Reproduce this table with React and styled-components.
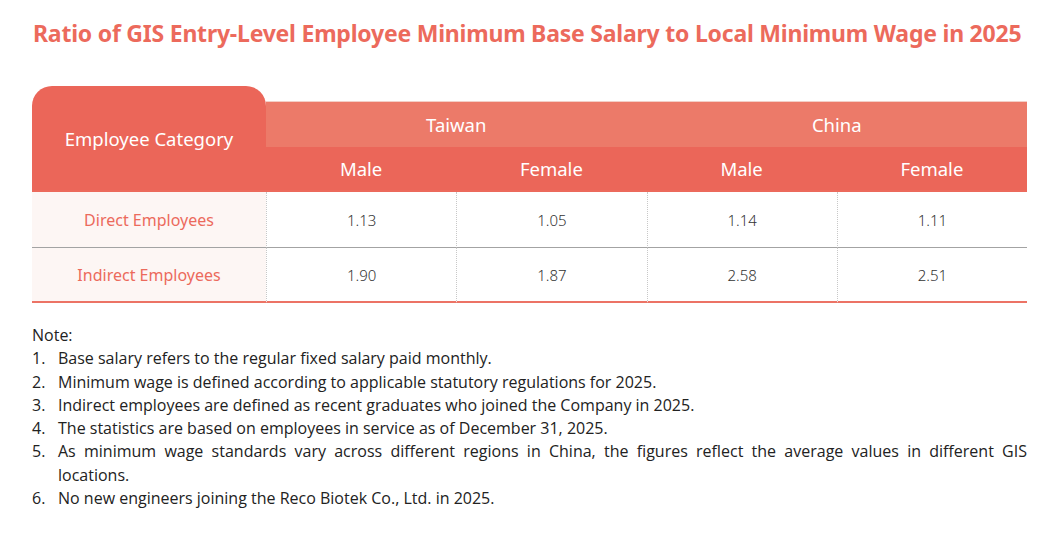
import React from "react";
import styled, { createGlobalStyle } from "styled-components";

const GlobalStyle = createGlobalStyle`
  html, body {
    margin: 0;
    padding: 0;
    background: #ffffff;
  }
  body {
    font-family: "Noto Sans", "Open Sans", sans-serif;
  }
`;

const Page = styled.div`
  width: 1052px;
  height: 535px;
  box-sizing: border-box;
  padding: 16px 25px 0 32px;
`;

const Title = styled.h1`
  margin: 0 0 36px 1px;
  font-family: "Noto Sans", sans-serif;
  font-size: 23px;
  line-height: 34px;
  font-weight: 700;
  color: #ec6a5c;
  letter-spacing: -0.22px;
`;

const Table = styled.div`
  display: grid;
  grid-template-columns: 234px repeat(4, 1fr);
  grid-template-rows: 15px 46px 45px 56px 55px;
`;

const CategoryHead = styled.div`
  grid-row: 1 / span 3;
  grid-column: 1;
  background: #eb6659;
  border-radius: 20px 20px 0 0;
  color: #fff;
  font-size: 18.5px;
  display: flex;
  align-items: center;
  justify-content: center;
  border-bottom: 2px solid #ec6a5c;
`;

const RegionHead = styled.div`
  grid-row: 2;
  grid-column: ${({ $col }) => $col} / span 2;
  background: #ec7a69;
  border-top: 1px solid #f3cfc7;
  color: #fff;
  font-size: 18.5px;
  display: flex;
  align-items: center;
  justify-content: center;
`;

const GenderHead = styled.div`
  grid-row: 3;
  background: #eb6659;
  color: #fff;
  font-size: 18.5px;
  display: flex;
  align-items: center;
  justify-content: center;
  border-bottom: 2px solid #ec6a5c;
`;

const Cell = styled.div`
  grid-row: ${({ $row }) => $row};
  display: flex;
  align-items: center;
  justify-content: center;
  font-size: 15px;
  color: #333;
  font-weight: 300;
  border-bottom: ${({ $last }) => ($last ? "2px solid #ec7365" : "1px solid #a3a3a3")};
  border-left: ${({ $first }) => ($first ? "none" : "1px dotted #c8c8c8")};
  background: ${({ $label }) => ($label ? "#fdf6f4" : "#fff")};
  ${({ $label }) => $label && "color: #ec6a5c; font-size: 16px; font-weight: 400;"}
`;

const Notes = styled.div`
  margin-top: 21px;
  font-family: "Open Sans", sans-serif;
  font-size: 16px;
  line-height: 23.3px;
  color: #222;
`;

const NoteList = styled.ol`
  margin: 0;
  padding: 0;
  list-style: none;
`;

const NoteItem = styled.li`
  display: grid;
  grid-template-columns: 26px 1fr;
  text-align: justify;
`;

const rows = [
  { label: "Direct Employees", values: ["1.13", "1.05", "1.14", "1.11"] },
  { label: "Indirect Employees", values: ["1.90", "1.87", "2.58", "2.51"] },
];

const notes = [
  "Base salary refers to the regular fixed salary paid monthly.",
  "Minimum wage is defined according to applicable statutory regulations for 2025.",
  "Indirect employees are defined as recent graduates who joined the Company in 2025.",
  "The statistics are based on employees in service as of December 31, 2025.",
  "As minimum wage standards vary across different regions in China, the figures reflect the average values in different GIS locations.",
  "No new engineers joining the Reco Biotek Co., Ltd. in 2025.",
];

export default function App() {
  return (
    <Page>
      <GlobalStyle />
      <Title>Ratio of GIS Entry-Level Employee Minimum Base Salary to Local Minimum Wage in 2025</Title>
      <Table>
        <CategoryHead>Employee Category</CategoryHead>
        <RegionHead $col={2}>Taiwan</RegionHead>
        <RegionHead $col={4}>China</RegionHead>
        <GenderHead>Male</GenderHead>
        <GenderHead>Female</GenderHead>
        <GenderHead>Male</GenderHead>
        <GenderHead>Female</GenderHead>
        {rows.map((row, i) => (
          <React.Fragment key={row.label}>
            <Cell $row={i + 4} $label $first $last={i === rows.length - 1}>
              {row.label}
            </Cell>
            {row.values.map((v, j) => (
              <Cell key={j} $row={i + 4} $last={i === rows.length - 1}>
                {v}
              </Cell>
            ))}
          </React.Fragment>
        ))}
      </Table>
      <Notes>
        Note:
        <NoteList>
          {notes.map((n, i) => (
            <NoteItem key={i}>
              <span>{i + 1}.</span>
              <span>{n}</span>
            </NoteItem>
          ))}
        </NoteList>
      </Notes>
    </Page>
  );
}
